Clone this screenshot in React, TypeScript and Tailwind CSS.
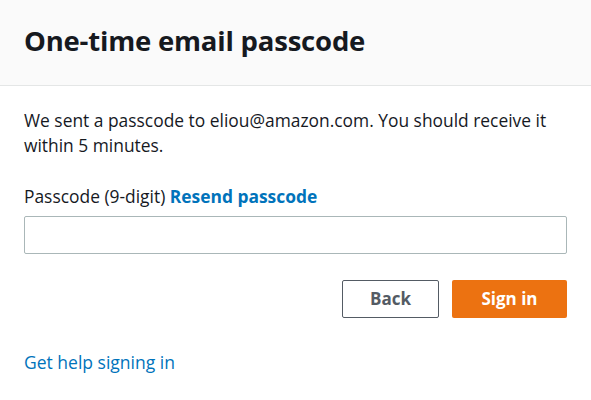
import React, { useState } from 'react';

export default function App() {
  const [code, setCode] = useState('');

  return (
    <div className="w-[591px] h-[400px] bg-white font-['Open_Sans',sans-serif] text-[#16191f] overflow-hidden">
      <div className="h-[86px] bg-[#fafafa] border-b border-[#e4e6e6] flex items-center px-6">
        <h1 className="text-[27.5px] font-bold tracking-[-0.2px] leading-[34px] -mt-1">One-time email passcode</h1>
      </div>

      <div className="px-6">
        <p className="mt-[22px] text-[17.4px] leading-[25px] w-[543px]">
          We sent a passcode to eliou@amazon.com. You should receive it within 5 minutes.
        </p>

        <div className="mt-[26px] text-[17.4px] leading-[25px]">
          Passcode (9-digit){' '}
          <a href="#" className="text-[#0073bb] font-bold">Resend passcode</a>
        </div>

        <input
          value={code}
          onChange={e => setCode(e.target.value)}
          className="mt-[7px] w-full h-[38px] border border-[#aab7b8] rounded-[2px] px-3 text-[16px] outline-none"
        />

        <div className="mt-[26px] flex justify-end gap-[13px]">
          <button className="w-[97px] h-[38px] border-[1.5px] border-[#545b64] rounded-[2px] text-[#545b64] font-bold text-[17px]">
            Back
          </button>
          <button className="w-[115px] h-[38px] bg-[#ec7211] rounded-[2px] text-white font-bold text-[17px]">
            Sign in
          </button>
        </div>

        <a href="#" className="block mt-[32px] text-[#0073bb] text-[17.5px] leading-[25px]">
          Get help signing in
        </a>
      </div>
    </div>
  );
}
